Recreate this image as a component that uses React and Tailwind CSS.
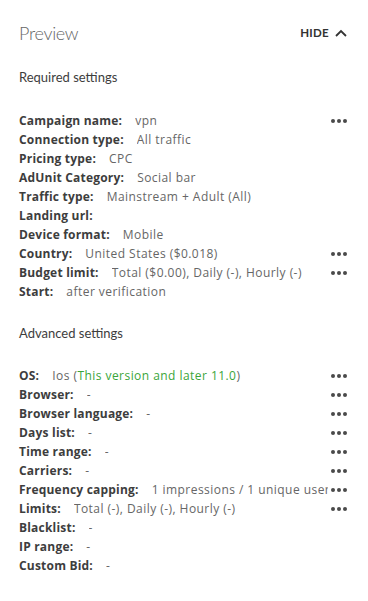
import React from "react";

const Dots = () => (
  <span className="flex items-center gap-[2px] w-[16px] ml-[3px] shrink-0 justify-end">
    <span className="w-[4px] h-[4px] rounded-full bg-[#4a4a4a]" />
    <span className="w-[4px] h-[4px] rounded-full bg-[#4a4a4a]" />
    <span className="w-[4px] h-[4px] rounded-full bg-[#4a4a4a]" />
  </span>
);

const Row = ({ label, value, dots }) => (
  <div
    className="flex items-center h-[19px] text-[12px]"
    style={{ fontFamily: "'Open Sans', sans-serif" }}
  >
    <span className="font-bold text-[#3d3d3d] whitespace-nowrap shrink-0 tracking-[0.2px]">{label}</span>
    <span className="ml-[13px] text-[#666] whitespace-nowrap overflow-hidden flex-1 min-w-0 tracking-[0.45px]">
      {value}
    </span>
    {dots ? <Dots /> : null}
  </div>
);

const required = [
  ["Campaign name:", "vpn", true],
  ["Connection type:", "All traffic", false],
  ["Pricing type:", "CPC", false],
  ["AdUnit Category:", "Social bar", false],
  ["Traffic type:", "Mainstream + Adult (All)", false],
  ["Landing url:", "", false],
  ["Device format:", "Mobile", false],
  ["Country:", "United States ($0.018)", true],
  ["Budget limit:", "Total ($0.00), Daily (-), Hourly (-)", true],
  ["Start:", "after verification", false],
];

const advanced = [
  [
    "OS:",
    <>
      Ios (<span className="text-[#3aa53a]">This version and later 11.0</span>)
    </>,
    true,
  ],
  ["Browser:", "-", true],
  ["Browser language:", "-", true],
  ["Days list:", "-", true],
  ["Time range:", "-", true],
  ["Carriers:", "-", true],
  ["Frequency capping:", "1 impressions / 1 unique user", true],
  ["Limits:", "Total (-), Daily (-), Hourly (-)", true],
  ["Blacklist:", "-", false],
  ["IP range:", "-", false],
  ["Custom Bid:", "-", false],
];

export default function App() {
  return (
    <div
      className="w-[368px] h-[601px] bg-white pl-[19px] pr-[21px]"
      style={{ fontFamily: "Lato, 'Open Sans', sans-serif" }}
    >
      <div className="flex items-center justify-between h-[66px]">
        <span className="text-[18px] font-light text-[#666] tracking-[-0.3px]">Preview</span>
        <span className="flex items-center gap-[6px] text-[11.5px] font-bold text-[#333] tracking-[0.3px]">
          HIDE
          <svg width="12" height="8" viewBox="0 0 12 8" fill="none">
            <path d="M1 7 L6 2 L11 7" stroke="#333" strokeWidth="1.8" />
          </svg>
        </span>
      </div>
      <div className="mt-[2px] h-[20px] flex items-center text-[13px] text-[#3d3d3d]">
        Required settings
      </div>
      <div className="mt-[23px]">
        {required.map(([l, v, d]) => (
          <Row key={l} label={l} value={v} dots={d} />
        ))}
      </div>
      <div className="mt-[23px] h-[20px] flex items-center text-[13px] text-[#3d3d3d]">
        Advanced settings
      </div>
      <div className="mt-[22px]">
        {advanced.map(([l, v, d]) => (
          <Row key={l} label={l} value={v} dots={d} />
        ))}
      </div>
    </div>
  );
}
